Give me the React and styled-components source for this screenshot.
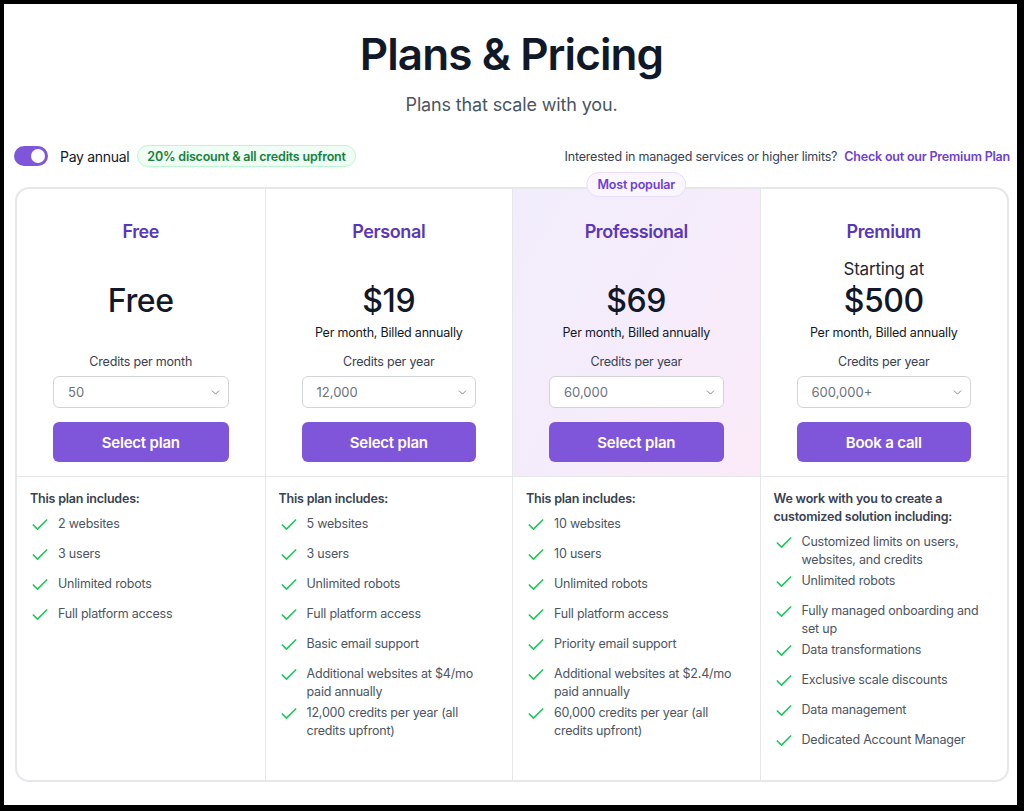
import React from "react";
import styled, { createGlobalStyle } from "styled-components";
import { Check, ChevronDown } from "lucide-react";

const Global = createGlobalStyle`
  html, body { margin: 0; padding: 0; background: #000; }
  body { font-family: Inter, "Noto Sans", sans-serif; -webkit-font-smoothing: antialiased; }
  * { box-sizing: border-box; }
`;

const Frame = styled.div`
  width: 1024px;
  height: 811px;
  border-style: solid;
  border-color: #000;
  border-width: 4px 7px 6px 4px;
  background: #fff;
  padding: 0 8px 0 10px;
  display: flex;
  flex-direction: column;
`;

const Title = styled.h1`
  margin: 24px 0 0;
  font-size: 44px;
  line-height: 52px;
  font-weight: 600;
  color: #111827;
  text-align: center;
  letter-spacing: -0.9px;
`;

const Subtitle = styled.p`
  margin: 13px 0 0;
  font-size: 18px;
  line-height: 24px;
  color: #4b5563;
  text-align: center;
  letter-spacing: -0.15px;
`;

const TopRow = styled.div`
  margin-top: 28px;
  height: 22px;
  display: flex;
  align-items: center;
  justify-content: space-between;
`;

const Left = styled.div`
  display: flex;
  align-items: center;
`;

const Toggle = styled.div`
  width: 34px;
  height: 20px;
  border-radius: 10px;
  background: #7f56d9;
  display: flex;
  align-items: center;
  justify-content: flex-end;
  padding: 0 3px;
`;

const Knob = styled.div`
  width: 14px;
  height: 14px;
  border-radius: 50%;
  background: #fff;
`;

const ToggleLabel = styled.span`
  margin-left: 12px;
  font-size: 14px;
  letter-spacing: -0.3px;
  color: #111827;
`;

const Discount = styled.span`
  margin-left: 8px;
  height: 22px;
  padding: 0 9px;
  display: inline-flex;
  align-items: center;
  border-radius: 11px;
  background: #f0fdf4;
  border: 1px solid #bbf7d0;
  color: #15803d;
  font-size: 12.5px;
  letter-spacing: -0.2px;
  font-weight: 600;
`;

const RightNote = styled.div`
  font-size: 12.5px;
  letter-spacing: -0.2px;
  color: #374151;
  margin-right: -1px;
`;

const Link = styled.a`
  margin-left: 7px;
  color: #6d3fd6;
  font-weight: 600;
  text-decoration: none;
`;

const Card = styled.div`
  margin: 20px 0 0 1px;
  border: 2px solid #e5e7eb;
  border-radius: 14px;
  display: grid;
  grid-template-columns: repeat(4, 1fr);
  grid-template-rows: auto 1fr;
`;

const Top = styled.div`
  position: relative;
  padding: 31px 36px 14px;
  display: flex;
  flex-direction: column;
  align-items: center;
  border-left: ${(p) => (p.$first ? "none" : "1px solid #e5e7eb")};
  border-bottom: 1px solid #e5e7eb;
  background: ${(p) => (p.$highlight ? "linear-gradient(120deg, #f1edfc 0%, #f6ecfb 55%, #fbeaf8 100%)" : "transparent")};
`;

const Popular = styled.span`
  position: absolute;
  top: -17px;
  left: 50%;
  transform: translateX(-50%);
  height: 25px;
  padding: 0 10px;
  display: inline-flex;
  align-items: center;
  border-radius: 13px;
  background: #faf6ff;
  border: 1px solid #eadcfb;
  color: #6d3fd6;
  font-size: 12.5px;
  letter-spacing: -0.2px;
  font-weight: 600;
  white-space: nowrap;
`;

const PlanName = styled.h2`
  margin: 0;
  font-size: 18px;
  line-height: 24px;
  font-weight: 600;
  letter-spacing: -0.4px;
  color: #5a37b8;
`;

const PreLine = styled.div`
  margin-top: 13px;
  height: 24px;
  font-size: 17px;
  line-height: 24px;
  letter-spacing: -0.2px;
  color: #1f2937;
`;

const Price = styled.div`
  height: 40px;
  font-size: 32px;
  line-height: 40px;
  font-weight: 500;
  letter-spacing: -0.4px;
  color: #111827;
`;

const PostLine = styled.div`
  margin-top: 2px;
  height: 20px;
  font-size: 12.5px;
  letter-spacing: -0.2px;
  line-height: 20px;
  color: #111827;
`;

const CreditsLabel = styled.div`
  margin-top: 9px;
  font-size: 12.5px;
  letter-spacing: -0.2px;
  line-height: 20px;
  color: #374151;
`;

const SelectBox = styled.div`
  margin-top: 4px;
  width: 100%;
  height: 32px;
  border: 1px solid #d1d5db;
  border-radius: 6px;
  background: #fff;
  display: flex;
  align-items: center;
  justify-content: space-between;
  padding: 0 6px 0 14px;
  font-size: 13px;
  color: #6b7280;
`;

const Button = styled.button`
  margin-top: 14px;
  width: 100%;
  height: 40px;
  border: none;
  border-radius: 6px;
  background: #7f56d9;
  color: #fff;
  font-family: inherit;
  font-size: 15px;
  letter-spacing: -0.2px;
  font-weight: 600;
`;

const Features = styled.div`
  padding: 13px 14px 22px 13px;
  border-left: ${(p) => (p.$first ? "none" : "1px solid #e5e7eb")};
`;

const FeatHeader = styled.div`
  font-size: 12.5px;
  letter-spacing: -0.2px;
  line-height: 18px;
  font-weight: 600;
  color: #374151;
  margin-bottom: 7px;
`;

const List = styled.ul`
  list-style: none;
  margin: 0;
  padding: 0;
  display: flex;
  flex-direction: column;
  gap: 3px;
`;

const Item = styled.li`
  display: flex;
  align-items: flex-start;
  gap: 8px;
  min-height: 27px;
  font-size: 12.5px;
  letter-spacing: -0.2px;
  line-height: 18px;
  color: #4b5563;
  svg { flex-shrink: 0; }
`;

const plans = [
  {
    name: "Free",
    price: "Free",
    label: "Credits per month",
    value: "50",
    cta: "Select plan",
    header: "This plan includes:",
    features: ["2 websites", "3 users", "Unlimited robots", "Full platform access"],
  },
  {
    name: "Personal",
    price: "$19",
    post: "Per month, Billed annually",
    label: "Credits per year",
    value: "12,000",
    cta: "Select plan",
    header: "This plan includes:",
    features: [
      "5 websites",
      "3 users",
      "Unlimited robots",
      "Full platform access",
      "Basic email support",
      "Additional websites at $4/mo paid annually",
      "12,000 credits per year (all credits upfront)",
    ],
  },
  {
    name: "Professional",
    price: "$69",
    post: "Per month, Billed annually",
    label: "Credits per year",
    value: "60,000",
    cta: "Select plan",
    popular: true,
    header: "This plan includes:",
    features: [
      "10 websites",
      "10 users",
      "Unlimited robots",
      "Full platform access",
      "Priority email support",
      "Additional websites at $2.4/mo paid annually",
      "60,000 credits per year (all credits upfront)",
    ],
  },
  {
    name: "Premium",
    pre: "Starting at",
    price: "$500",
    post: "Per month, Billed annually",
    label: "Credits per year",
    value: "600,000+",
    cta: "Book a call",
    header: "We work with you to create a customized solution including:",
    features: [
      "Customized limits on users, websites, and credits",
      "Unlimited robots",
      "Fully managed onboarding and set up",
      "Data transformations",
      "Exclusive scale discounts",
      "Data management",
      "Dedicated Account Manager",
    ],
  },
];

export default function App() {
  return (
    <>
      <Global />
      <Frame>
        <Title>Plans &amp; Pricing</Title>
        <Subtitle>Plans that scale with you.</Subtitle>
        <TopRow>
          <Left>
            <Toggle>
              <Knob />
            </Toggle>
            <ToggleLabel>Pay annual</ToggleLabel>
            <Discount>20% discount &amp; all credits upfront</Discount>
          </Left>
          <RightNote>
            Interested in managed services or higher limits?
            <Link href="#">Check out our Premium Plan</Link>
          </RightNote>
        </TopRow>
        <Card>
          {plans.map((p, i) => (
            <Top key={p.name} $first={i === 0} $highlight={p.popular} style={{ gridColumn: i + 1, gridRow: 1 }}>
              {p.popular && <Popular>Most popular</Popular>}
              <PlanName>{p.name}</PlanName>
              <PreLine>{p.pre || ""}</PreLine>
              <Price>{p.price}</Price>
              <PostLine>{p.post || ""}</PostLine>
              <CreditsLabel>{p.label}</CreditsLabel>
              <SelectBox>
                <span>{p.value}</span>
                <ChevronDown size={13} color="#6b7280" strokeWidth={1.6} />
              </SelectBox>
              <Button>{p.cta}</Button>
            </Top>
          ))}
          {plans.map((p, i) => (
            <Features key={p.name + "-f"} $first={i === 0} style={{ gridColumn: i + 1, gridRow: 2 }}>
              <FeatHeader>{p.header}</FeatHeader>
              <List>
                {p.features.map((f) => (
                  <Item key={f}>
                    <Check size={20} color="#22c55e" strokeWidth={2} />
                    <span>{f}</span>
                  </Item>
                ))}
              </List>
            </Features>
          ))}
        </Card>
      </Frame>
    </>
  );
}
